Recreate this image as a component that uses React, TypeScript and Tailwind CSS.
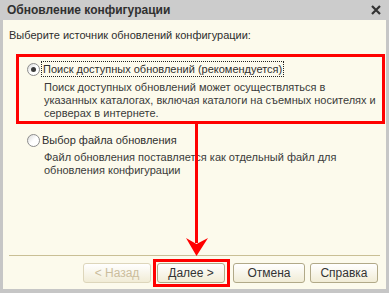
import React from "react";

function Radio({ checked }: { checked?: boolean }) {
  return (
    <span className="relative flex h-[13px] w-[13px] shrink-0 items-center justify-center rounded-full border border-[#8c8c8c] bg-gradient-to-br from-[#d8d8d8] via-white to-white">
      {checked && <span className="h-[5px] w-[5px] rounded-full bg-[#3a3a3a]" />}
    </span>
  );
}

function DialogButton({
  label,
  disabled,
  className = "",
}: {
  label: string;
  disabled?: boolean;
  className?: string;
}) {
  return (
    <button
      className={`flex h-[20px] items-center justify-center rounded-[3px] border bg-gradient-to-b from-white to-[#f1ecd6] text-[12px] ${
        disabled ? "border-[#ddd6bb] text-[#cbbd9c]" : "border-[#b1a988] text-[#333]"
      } ${className}`}
    >
      {label}
    </button>
  );
}

export default function App() {
  return (
    <div
      className="relative flex h-[293px] w-[389px] flex-col bg-[#c6c6c6] text-[#2e2e2e]"
      style={{ fontFamily: '"Liberation Sans", Arial, sans-serif' }}
    >
      <div className="flex h-[20px] shrink-0 items-center justify-between bg-[#cccccc] pl-[7px] pr-[8px]">
        <span className="text-[12px] font-bold leading-none text-[#303030]">Обновление конфигурации</span>
        <svg width="10" height="10" viewBox="0 0 10 10">
          <path d="M1 1L9 9M9 1L1 9" stroke="#333" strokeWidth="2.2" />
        </svg>
      </div>

      <div className="mx-[3px] mb-[4px] flex flex-1 flex-col bg-[#fcfaec] text-[11px]">
        <div className="mt-[8px] pl-[6px] leading-[14px]">Выберите источник обновлений конфигурации:</div>

        <div className="mt-[19px] flex h-[16px] items-center pl-[24px]">
          <Radio checked />
          <span className="ml-[1px] border border-dotted border-[#222] px-[1px] leading-[14px]">
            Поиск доступных обновлений (рекомендуется)
          </span>
        </div>
        <div className="mt-[4px] pl-[41px] pr-[8px] leading-[13px] text-[#3a3a3a]">
          Поиск доступных обновлений может осуществляться в
          <br />
          указанных каталогах, включая каталоги на съемных носителях и
          <br />
          серверах в интернете.
        </div>

        <div className="mt-[12px] flex h-[16px] items-center pl-[24px]">
          <Radio />
          <span className="ml-[2px] leading-[14px]">Выбор файла обновления</span>
        </div>
        <div className="mt-[3px] pl-[41px] leading-[13px] text-[#3a3a3a]">
          Файл обновления поставляется как отдельный файл для
          <br />
          обновления конфигурации
        </div>

        <div className="flex-1" />
        <div className="mx-[6px] h-px bg-[#c9bf95]" />
        <div className="mb-[6px] mt-[7px] flex justify-end pr-[8px]">
          <DialogButton label="< Назад" disabled className="w-[68px]" />
          <DialogButton label="Далее >" className="ml-[6px] w-[68px]" />
          <DialogButton label="Отмена" className="ml-[8px] w-[72px]" />
          <DialogButton label="Справка" className="ml-[5px] w-[68px]" />
        </div>
      </div>

      {/* annotations */}
      <div className="pointer-events-none absolute left-[16px] top-[54px] h-[70px] w-[369px] border-[3px] border-[#ff0000]" />
      <div className="pointer-events-none absolute left-[153px] top-[259px] h-[28px] w-[77px] border-[3px] border-[#ff0000]" />
      <svg className="pointer-events-none absolute left-0 top-0" width="389" height="293">
        <rect x="195" y="123" width="3" height="120" fill="#ff0000" />
        <path d="M186 238 L196.5 256 L208 238 L196.5 244 Z" fill="#ff0000" />
      </svg>
    </div>
  );
}
